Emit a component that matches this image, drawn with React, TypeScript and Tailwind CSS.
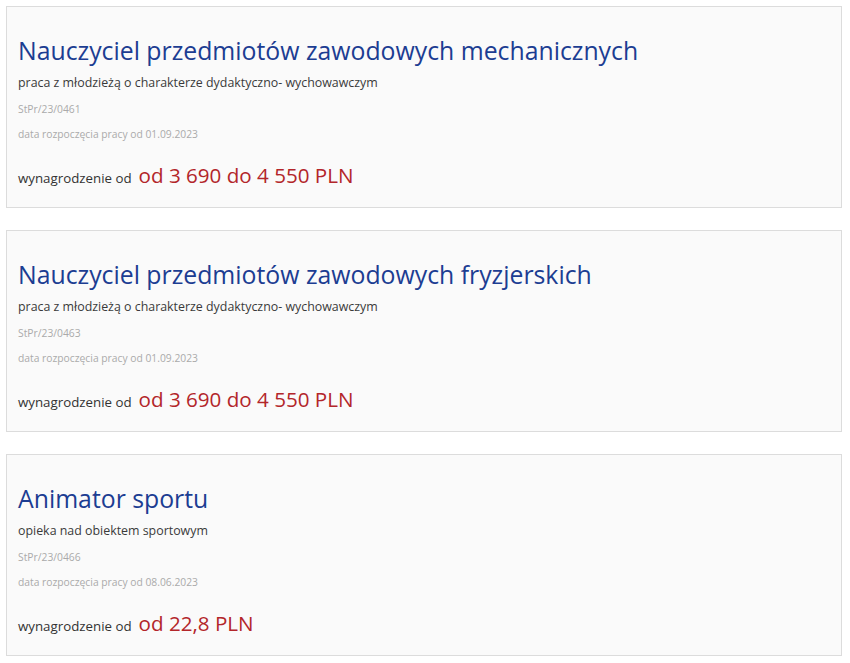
const offers = [
  {
    title: "Nauczyciel przedmiotów zawodowych mechanicznych",
    desc: "praca z młodzieżą o charakterze dydaktyczno- wychowawczym",
    code: "StPr/23/0461",
    start: "01.09.2023",
    pay: "od 3 690 do 4 550 PLN",
  },
  {
    title: "Nauczyciel przedmiotów zawodowych fryzjerskich",
    desc: "praca z młodzieżą o charakterze dydaktyczno- wychowawczym",
    code: "StPr/23/0463",
    start: "01.09.2023",
    pay: "od 3 690 do 4 550 PLN",
  },
  {
    title: "Animator sportu",
    desc: "opieka nad obiektem sportowym",
    code: "StPr/23/0466",
    start: "08.06.2023",
    pay: "od 22,8 PLN",
  },
];

export default function App() {
  return (
    <div className="flex flex-col gap-[22px] bg-white pt-[6px] pl-[6px] pr-[8px] font-['Open_Sans',sans-serif]">
      {offers.map((o) => (
        <div
          key={o.code}
          className="h-[202px] border border-[#dcdcdc] bg-[#fafafa] px-[11px] pt-[29px]"
        >
          <h2 className="text-[24.8px] leading-[28px] text-[#1c3d92]">{o.title}</h2>
          <p className="mt-[11px] text-[12.4px] leading-[16px] text-[#3a3a3a]">{o.desc}</p>
          <p className="mt-[11px] text-[10.3px] leading-[14px] text-[#aaa]">{o.code}</p>
          <p className="mt-[11px] text-[10.3px] leading-[14px] text-[#aaa]">
            data rozpoczęcia pracy od {o.start}
          </p>
          <p className="mt-[21px] flex items-baseline gap-[7px]">
            <span className="text-[13.3px] text-[#333]">wynagrodzenie od</span>
            <span className="text-[20.6px] leading-[26px] text-[#b3262a]">{o.pay}</span>
          </p>
        </div>
      ))}
    </div>
  );
}
